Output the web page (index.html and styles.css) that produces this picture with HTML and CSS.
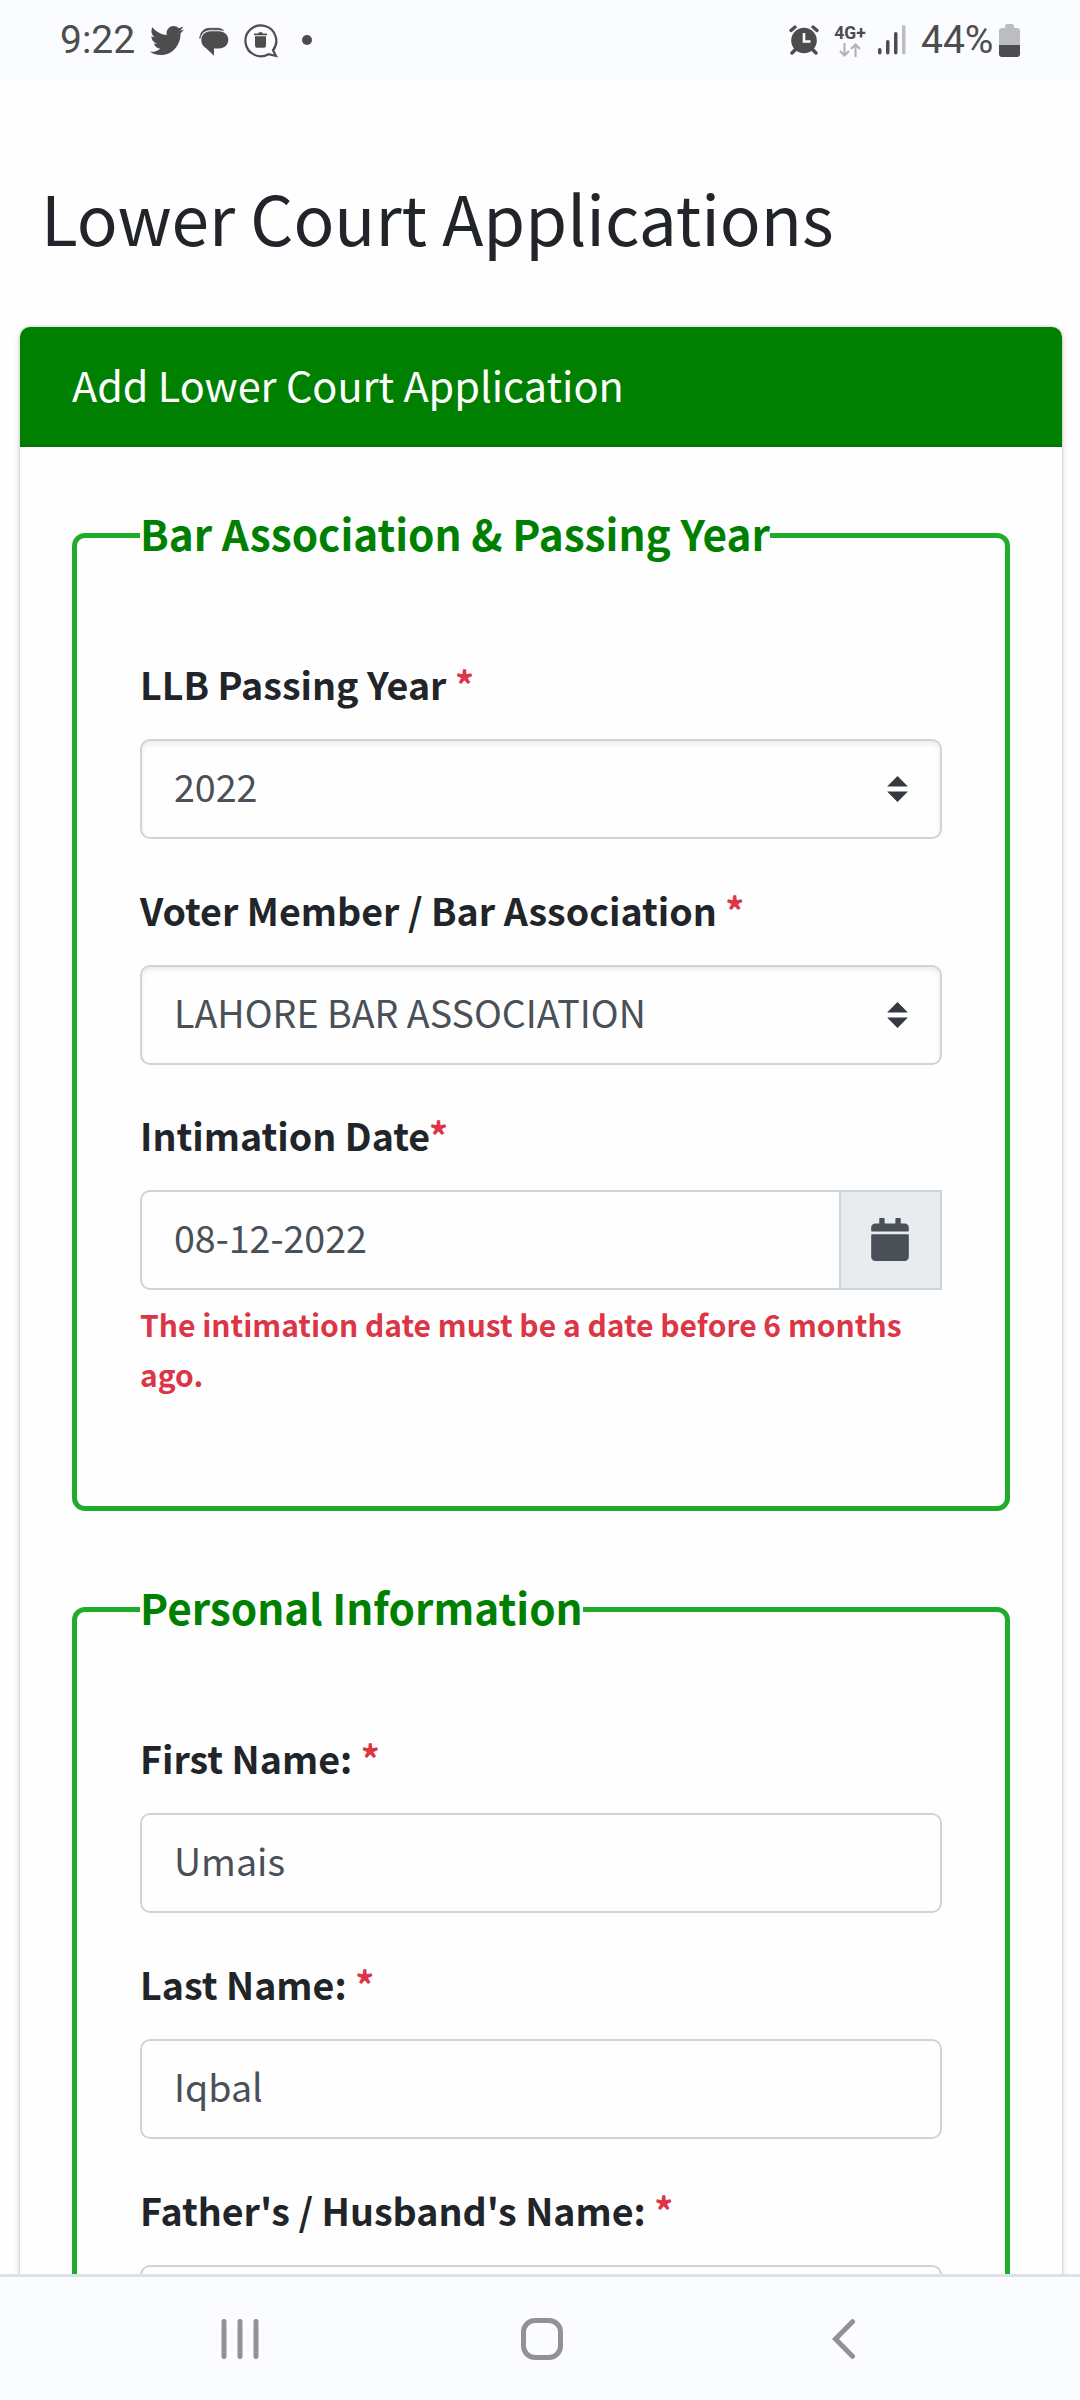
FILE: index.html
```html
<!DOCTYPE html>
<html lang="en">
<head>
<meta charset="utf-8">
<title>Lower Court Applications</title>
<link rel="stylesheet" href="styles.css">
</head>
<body>
<div class="status-bar">
  <span class="clock">9:22</span>
  <svg class="icon twitter" width="34" height="29" viewBox="0 48 512 416" preserveAspectRatio="none"><path d="M459.37 151.716c.325 4.548.325 9.097.325 13.645 0 138.72-105.583 298.558-298.558 298.558-59.452 0-114.68-17.219-161.137-47.106 8.447.974 16.568 1.299 25.34 1.299 49.055 0 94.213-16.568 130.274-44.832-46.132-.975-84.792-31.188-98.112-72.772 6.498.974 12.995 1.624 19.818 1.624 9.421 0 18.843-1.3 27.614-3.573-48.081-9.747-84.143-51.98-84.143-102.985v-1.299c13.969 7.797 30.214 12.67 47.431 13.319-28.264-18.843-46.781-51.005-46.781-87.391 0-19.492 5.197-37.36 14.294-52.954 51.655 63.675 129.3 105.258 216.365 109.807-1.624-7.797-2.599-15.918-2.599-24.04 0-57.828 46.782-104.934 104.934-104.934 30.213 0 57.502 12.67 76.67 33.137 23.715-4.548 46.456-13.32 66.599-25.34-7.798 24.366-24.366 44.833-46.132 57.827 21.117-2.273 41.584-8.122 60.426-16.243-14.292 20.791-32.161 39.308-52.628 54.253z"/></svg>
  <svg class="icon chat" width="30" height="30" viewBox="0 0 30 30"><path d="M11.500 4.200H20c5.500 0 9.300 3.600 9.300 8.600s-3.800 8.700-9.300 8.700h-5v7.300L6.800 21C4 19.300 2.300 16.500 2.300 12.900c0-5 3.700-8.700 9.200-8.700z"/><path d="M.9 11.500C.9 5.500 4.800 1.300 10.500 1.300H18c3 0 5 .8 6.500 2.300-1.500-.6-3-.8-4.500-.8h-8.500C6 2.800 1.700 6.300.9 11.500z" stroke="#4d4d4d" stroke-width=".8"/></svg>
  <svg class="icon bubble" width="35" height="35" viewBox="0 0 35 35"><path d="M30 27.300A15.400 15.400 0 1 0 25.500 31.200L33 33z" fill="none" stroke="#4d4d4d" stroke-width="2.200"/><path d="M11 10.500h4l1-1.200h3l1 1.200h4v1.800H11zM12 13.300h11v9.500a2 2 0 0 1-2 2h-7a2 2 0 0 1-2-2z"/></svg>
  <svg class="icon dot" width="10" height="10" viewBox="0 0 10 10"><circle cx="5" cy="5" r="5"/></svg>
  <span class="spacer"></span>
  <svg class="icon alarm" width="30" height="30" viewBox="0 0 30 30"><circle cx="15" cy="15.500" r="12.800"/><path d="M2 5.500 6 2M28 5.500 24 2M6 25l-3 3M24 25l3 3" fill="none" stroke="#4d4d4d" stroke-width="3.400" stroke-linecap="round"/><path d="M15 8v8.500h6.500" fill="none" stroke="#fbfcff" stroke-width="2.600"/></svg>
  <span class="network">
    <span class="network-type">4G+</span>
    <svg width="24" height="14" viewBox="0 0 24 14"><path d="M6.500 0v12M2 8l4.500 4.500L11 8M17.500 14V2M13 6l4.500-4.500L22 6" fill="none" stroke="#b5b5b7" stroke-width="2.200"/></svg>
  </span>
  <svg class="icon signal" width="29" height="30" viewBox="0 0 29 30"><rect x="1" y="23" width="3.500" height="6.500" rx="1.700"/><rect x="9" y="15" width="3.500" height="14.500" rx="1.700"/><rect x="17" y="7" width="3.500" height="22.500" rx="1.700"/><rect x="25" y="0" width="3.500" height="29.500" rx="1.700" fill="#bcbdbf"/></svg>
  <span class="percent">44%</span>
  <svg class="icon battery" width="21" height="33" viewBox="0 0 21 33"><path d="M6 2a2 2 0 0 1 2-2h5a2 2 0 0 1 2 2v2h3a3 3 0 0 1 3 3v14H0V7a3 3 0 0 1 3-3h3z" fill="#bcbdbf"/><path d="M0 21h21v9a3 3 0 0 1-3 3H3a3 3 0 0 1-3-3z"/></svg>
</div>

<main class="page">
  <h1 class="page-title">Lower Court Applications</h1>
  <section class="card">
    <header class="card-header">Add Lower Court Application</header>
    <form class="card-body">
      <fieldset class="group">
        <legend>Bar Association &amp; Passing Year</legend>
        <div class="field">
          <label>LLB Passing Year <span class="required">*</span></label>
          <div class="control select"><span>2022</span><svg width="21" height="26" viewBox="0 0 4 5"><path d="M2 0L0 2h4zm0 5L0 3h4z"/></svg></div>
        </div>
        <div class="field">
          <label>Voter Member / Bar Association <span class="required">*</span></label>
          <div class="control select"><span>LAHORE BAR ASSOCIATION</span><svg width="21" height="26" viewBox="0 0 4 5"><path d="M2 0L0 2h4zm0 5L0 3h4z"/></svg></div>
        </div>
        <div class="field">
          <label>Intimation Date<span class="required">*</span></label>
          <div class="input-group">
            <div class="control"><span>08-12-2022</span></div>
            <div class="addon"><svg width="38" height="43" viewBox="0 0 448 512"><path d="M12 192h424c6.600 0 12 5.400 12 12v260c0 26.500-21.500 48-48 48H48c-26.500 0-48-21.500-48-48V204c0-6.600 5.400-12 12-12zm436-44v-36c0-26.500-21.500-48-48-48h-48V12c0-6.600-5.400-12-12-12h-40c-6.600 0-12 5.400-12 12v52H160V12c0-6.600-5.400-12-12-12h-40c-6.600 0-12 5.400-12 12v52H48C21.500 64 0 85.500 0 112v36c0 6.600 5.400 12 12 12h424c6.600 0 12-5.400 12-12z"/></svg></div>
          </div>
          <p class="error">The intimation date must be a date before 6 months ago.</p>
        </div>
      </fieldset>
      <fieldset class="group">
        <legend>Personal Information</legend>
        <div class="field">
          <label>First Name: <span class="required">*</span></label>
          <div class="control"><span>Umais</span></div>
        </div>
        <div class="field">
          <label>Last Name: <span class="required">*</span></label>
          <div class="control"><span>Iqbal</span></div>
        </div>
        <div class="field">
          <label>Father's / Husband's Name: <span class="required">*</span></label>
          <div class="control"></div>
        </div>
      </fieldset>
    </form>
  </section>
</main>

<nav class="nav-bar">
  <svg class="nav-recents" width="38" height="42" viewBox="0 0 38 42"><path d="M3 3.500v35M19 3.500v35M35 3.500v35"/></svg>
  <svg class="nav-home" width="42" height="42" viewBox="0 0 42 42"><rect x="2.500" y="2.500" width="37" height="37" rx="11.500"/></svg>
  <svg class="nav-back" width="24" height="42" viewBox="0 0 24 42"><path d="M20.500 3.700 3.500 21l17 17.300"/></svg>
</nav>
</body>
</html>
```
FILE: styles.css
```css
* { box-sizing: border-box; }

body {
  margin: 0;
  width: 1080px;
  height: 2400px;
  display: flex;
  flex-direction: column;
  overflow: hidden;
  background: #fefefe;
  color: #212529;
  font-family: "Noto Sans CJK SC", "Noto Sans", sans-serif;
  font-size: 37.6px;
}

svg { display: block; flex: none; }

/* Status bar */
.status-bar {
  flex: none;
  height: 80px;
  padding: 0 60px 0 60px;
  display: flex;
  align-items: center;
  background: #fbfcff;
  color: #4d4d4d;
  fill: #4d4d4d;
  font-family: Roboto, sans-serif;
  font-weight: 400;
}
.clock, .percent { font-size: 39px; line-height: 80px; }
.clock { width: 90px; }
.chat { margin-left: 15px; margin-top: 4px; }
.bubble { margin-left: 14px; }
.dot { margin-left: 24px; }
.spacer { flex: 1; }
.network {
  width: 34px;
  margin-left: 14px;
  display: flex;
  flex-direction: column;
  align-items: center;
  gap: 1px;
}
.network-type { font-size: 17.5px; line-height: 18px; font-weight: 700; }
.signal { margin-left: 10px; }
.percent { margin-left: 15px; width: 78px; white-space: nowrap; }

/* Page */
.page { flex: 1; min-height: 0; overflow: hidden; padding: 97px 18px 0 20px; }
.page-title {
  margin: 0 0 70px;
  padding-left: 21px;
  font-size: 67.6px;
  font-weight: 400;
  line-height: 80px;
}
.card {
  border-radius: 10px;
  box-shadow: 0 0 3px rgba(0, 0, 0, .25), 0 3px 8px rgba(0, 0, 0, .12);
}
.card-header {
  height: 120px;
  padding: 26px 52px 30px;
  border-bottom: 2px solid #0a700a;
  border-radius: 10px 10px 0 0;
  background: #008000;
  color: #fff;
  font-size: 41.4px;
  line-height: 62px;
}
.card-body { padding: 57px 52px 0; }

.group {
  min-width: 0;
  margin: 0 0 67px;
  padding: 88px 63px 65.5px;
  border: 5px solid #1fac2b;
  border-radius: 13px;
}
legend {
  padding: 0 0 5px;
  color: #008000;
  font-size: 42.3px;
  font-weight: 700;
  line-height: 58px;
}

/* Fields */
.field { margin-bottom: 41.5px; }
.group + .group .field { margin-bottom: 42px; }
label { display: block; margin-bottom: 27px; font-weight: 700; line-height: 57px; }
.required { color: #dc3545; }
.control {
  height: 100px;
  padding: 0 32px 7px;
  display: flex;
  align-items: center;
  justify-content: space-between;
  border: 2px solid #ced4da;
  border-radius: 10px;
  background: #fefefe;
  color: #495057;
}
.select { box-shadow: inset 0 3px 5px rgba(0, 0, 0, .075); }
.select svg { fill: #343a40; margin-top: 7px; }
.input-group { display: flex; }
.input-group .control { flex: 1; border-radius: 10px 0 0 10px; }
.addon {
  width: 103px;
  padding: 0 2px 2px 0;
  margin-left: -2px;
  display: flex;
  align-items: center;
  justify-content: center;
  border: 2px solid #ced4da;
  background: #e9ecef;
  fill: #495057;
}
.error {
  margin: 9px 0 0;
  color: #dc3545;
  font-size: 30px;
  font-weight: 700;
  line-height: 50px;
}

/* Navigation bar */
.nav-bar {
  flex: none;
  height: 126px;
  padding: 0 224px 0 221px;
  display: flex;
  align-items: center;
  border-top: 3px solid #dbe2e8;
  background: #fbfcff;
}
.nav-bar svg { fill: none; stroke: #929294; stroke-width: 5; stroke-linecap: round; }
.nav-home { margin-left: 262px; }
.nav-back { margin-left: auto; }
```
